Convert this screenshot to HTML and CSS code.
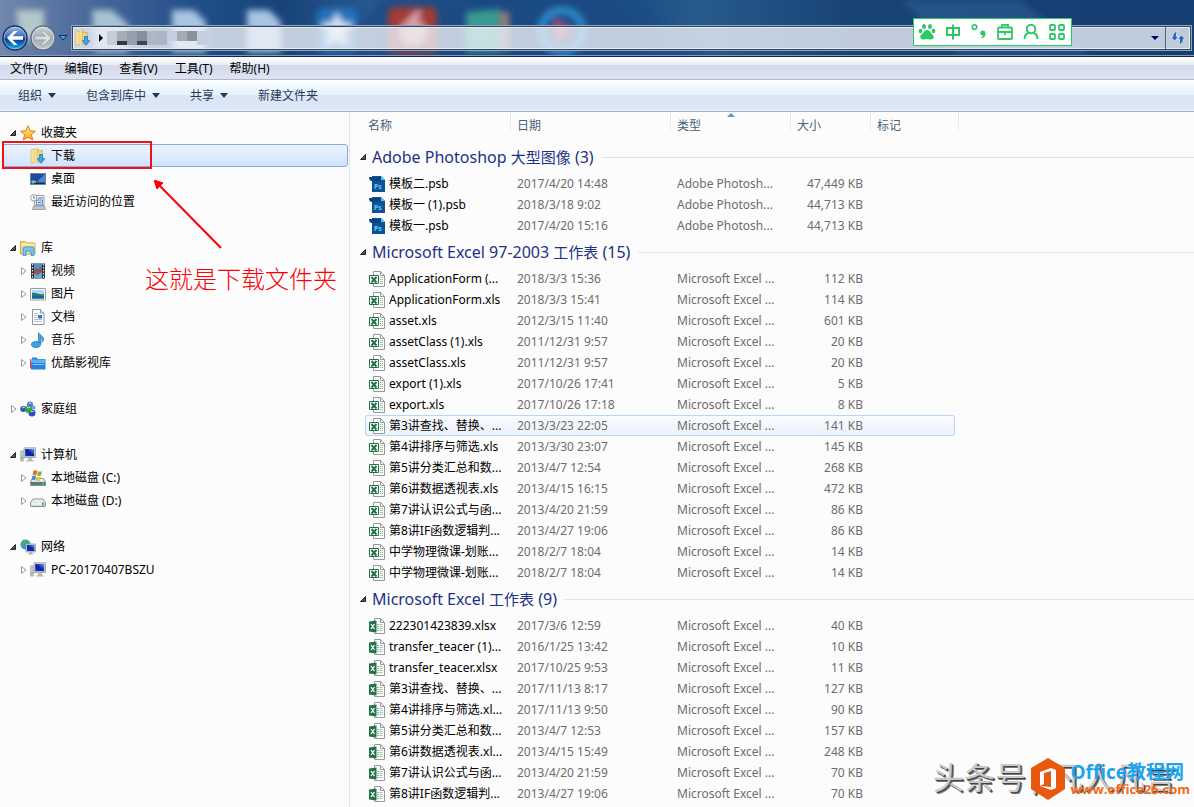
FILE: index.html
```html
<!DOCTYPE html>
<html lang="zh-CN">
<head>
<meta charset="utf-8">
<meta name="viewport" content="width=device-width, initial-scale=1">
<title>下载</title>
<link rel="stylesheet" href="styles.css">
</head>
<body>
<svg class="sprite" aria-hidden="true">
  <defs>
    <linearGradient id="g-folder" x1="0" x2="1"><stop offset="0" stop-color="#fbeeb0"/><stop offset="1" stop-color="#e3bd55"/></linearGradient>
    <linearGradient id="g-screen" x1="0" y1="1" x2="1" y2="0"><stop offset="0" stop-color="#1234b4"/><stop offset=".5" stop-color="#0b22a8"/><stop offset="1" stop-color="#6f9cf0"/></linearGradient>
    <linearGradient id="g-ball" x1="0" x2="0" y1="0" y2="1"><stop offset="0" stop-color="#9fc0ea"/><stop offset=".48" stop-color="#3465b4"/><stop offset=".52" stop-color="#06358e"/><stop offset="1" stop-color="#19b4f5"/></linearGradient>
    <linearGradient id="g-ball-off" x1="0" x2="0" y1="0" y2="1"><stop offset="0" stop-color="#d0d6d8"/><stop offset=".5" stop-color="#a3aeb3"/><stop offset="1" stop-color="#bcc8cc"/></linearGradient>
    <linearGradient id="g-star" x1="0" x2="0" y1="0" y2="1"><stop offset="0" stop-color="#fff08a"/><stop offset="1" stop-color="#f9a81c"/></linearGradient>
    <linearGradient id="g-disk" x1="0" x2="0" y1="0" y2="1"><stop offset="0" stop-color="#fdfdfd"/><stop offset="1" stop-color="#b9bcc0"/></linearGradient>
  </defs>
  <symbol id="open" viewBox="0 0 10 10"><path d="M6.500 2.500v5h-5z" fill="#555" stroke="#262626"/></symbol>
  <symbol id="closed" viewBox="0 0 8 10"><path d="M1.500 1.500 6 5 1.500 8.500z" fill="#fff" stroke="#999"/></symbol>
  <symbol id="star" viewBox="0 0 16 16"><path d="m8 .8 2.100 5 5.300.4-4 3.500 1.300 5.300L8 12.200 3.300 15l1.300-5.300-4-3.500 5.300-.4z" fill="url(#g-star)" stroke="#e07a1a"/></symbol>
  <symbol id="download" viewBox="0 0 16 16"><path d="M1 1.500 8 .5V14l-7 1z" fill="url(#g-folder)" stroke="#d8b550" stroke-width=".7"/><path d="M7 2.500h5.500V14H7z" fill="#f1d67d" stroke="#cda94a" stroke-width=".7"/><path d="M6 .6v14.800" stroke="#fff7cf"/><path d="M9.500 6.500h3v4.200h2.200L11 15.300l-3.700-4.600h2.200z" fill="#3ba9ea" stroke="#1d73b7" stroke-width=".8"/></symbol>
  <symbol id="desktop" viewBox="0 0 16 16"><path d="M.5 2.500h15v11H.5z" fill="#1d4da0" stroke="#70839a"/><path d="M6 12 15 3v9z" fill="#4688d8"/><path d="M1 11.500h14V13H1z" fill="#162d4e"/><circle cx="3" cy="11" r="1.700" fill="#69bde0"/><path d="M3 10h3v2z" fill="#e9c44a"/></symbol>
  <symbol id="recent" viewBox="0 0 16 16"><path d="M4.500 1.500h9.500V12H4.500z" fill="#f1f3f5" stroke="#9aa0a6"/><path d="M3.500 12h11l1 3.500h-13z" fill="#c3c7cb" stroke="#8f959b" stroke-width=".8"/><path d="M6.500 6h6v5h-6z" fill="#cfe3f7" stroke="#5f8fc4"/><path d="M8 8.500h3M8 4h5" stroke="#3f79bf"/><circle cx="3.700" cy="3.700" r="3.200" fill="#f4f5f6" stroke="#9ba3ab"/><path d="M3.700 2v2h1.500" fill="none" stroke="#555" stroke-width=".7"/></symbol>
  <symbol id="library" viewBox="0 0 16 16"><path d="M.5 1.500h5l1 1.500H15v11H.5z" fill="#f3dc85" stroke="#cbaa4c"/><path d="M1 4.500h14" stroke="#fff6c8"/><path d="M3 15.500V9q0-2 2-2h7q2 0 2 2v6.500h-3V11H6v4.500z" fill="#79c7ef" stroke="#398ec8" stroke-width=".8"/></symbol>
  <symbol id="video" viewBox="0 0 16 16"><path d="M1 .5h14v15H1z" fill="#26333d"/><path d="M4 1h8v6.500H4z" fill="#4097d6"/><path d="M4 8.500h8V15H4z" fill="#55aee5"/><path d="m4 7.500 1-2.500 3 1 4-3v4.500zM4 11l4 1 4-3v-.5H4z" fill="#a8533f"/><path d="M2.500 1v15M13.500 1v15" stroke="#dce5ea" stroke-dasharray="1.500 1.500" stroke-width="1.200"/></symbol>
  <symbol id="picture" viewBox="0 0 16 16"><path d="M.5 2.500h15v11.500H.5z" fill="#fff" stroke="#9a9a9a"/><path d="M2 4h12v8.500H2z" fill="#a7d8f5"/><path d="M2 7c4-1 6 2 12 1v4.500H2z" fill="#2b7c6b"/><path d="M2 10.500c5-1 8-1 12 0v2H2z" fill="#1a5fa8"/></symbol>
  <symbol id="document" viewBox="0 0 16 16"><path d="M2.500.5h8L14 4v11.500H2.500z" fill="#fff" stroke="#8c959d"/><path d="M10.500.5V4H14" fill="#e4e8eb" stroke="#8c959d"/><path d="M4 4.500h4M4 6.500h3M4 8.500h3M4 10.500h8M4 12.500h8" stroke="#9daec5" stroke-width=".8"/><path d="M8 6h4v3.500H8z" fill="#3679c2"/></symbol>
  <symbol id="music" viewBox="0 0 16 16"><path d="M8.500 12.500V.5c1 2.800 5.500 3.300 5 7.500-.2 1.300-1 2-1.800 2.500C13.300 7 11 6 10.500 5.500V12" fill="#45a9e6" stroke="#1b6fb4" stroke-width=".7"/><ellipse cx="6" cy="12.500" rx="4.600" ry="3" fill="#36a4e8" stroke="#1b75bb" stroke-width=".7"/></symbol>
  <symbol id="youku" viewBox="0 0 16 16"><path d="M.5 4v9l2 1z" fill="#e2405b" stroke="#e2405b"/><path d="M2 2.500h4.500L8 4h7.500v10.500H1z" fill="#2784dc"/><path d="M2 4.500h13.500V8H2z" fill="#5fb0f2"/><path d="M3 9.500h11" stroke="#b9dcfb" stroke-dasharray="1.500 .6"/></symbol>
  <symbol id="homegroup" viewBox="0 0 16 16"><circle cx="10" cy="3.500" r="3" fill="#4877d8"/><circle cx="3.200" cy="8" r="3" fill="#2855c0"/><circle cx="12" cy="12" r="3.500" fill="#2c4eba"/><circle cx="8.500" cy="8.300" r="3.700" fill="#38a341"/><circle cx="13.500" cy="6.500" r="2" fill="#6da4e9"/><path d="M2 7.200q1-1.500 2.500-.7M9 2.500q1-1 2.200 0M7 7q1.500-2 3-.5M11 11q1-1.300 2.500-.5" stroke="#e4f1ff" fill="none"/></symbol>
  <symbol id="computer" viewBox="0 0 16 16"><path d="M.8 4h2.400v10H.8z" fill="#d8d9da" stroke="#888" stroke-width=".7"/><path d="M1.500 10h1v2h-1z" fill="#2fbb3d"/><path d="M4 .8h11.500v9.700H4z" fill="#d9dadb" stroke="#999" stroke-width=".8"/><path d="M5.200 2h9v7.200h-9z" fill="url(#g-screen)"/><path d="M8.500 10.500h3l1 3h1.500v1H6v-1h1.500z" fill="#b7b9bb"/></symbol>
  <symbol id="disk-c" viewBox="0 0 16 16"><path d="m2.500 8.500-2 3.500v3.500h15V12l-2-3.500z" fill="url(#g-disk)" stroke="#777" stroke-width=".8"/><path d="M1 12h14v3H1z" fill="#487d8c"/><path d="M12 13h2v1.500h-2z" fill="#45e04d"/><path d="M3.500.7q2-1 3.800 0l-1 4.500q-1.800-1-3.800 0z" fill="#e96334"/><path d="M8 1.300q1.800.8 4 0L11 5.500q-1.900.8-4 0z" fill="#79b939"/><path d="M2.300 6q2-1 3.800 0l-1 4.300q-1.800-1-3.800 0z" fill="#3993d8"/><path d="M6.800 6.500q1.800.8 4 0l-1 4.200q-1.800.8-4 0z" fill="#f4c430"/></symbol>
  <symbol id="disk-d" viewBox="0 0 16 16"><path d="m3 6-2.500 3.500v3q0 1 1 1h13q1 0 1-1v-3L13 6z" fill="url(#g-disk)" stroke="#777" stroke-width=".8"/><path d="M1.500 9.500h13v3h-13z" fill="#eceded"/><path d="M12 9.500h2v3h-2z" fill="#3dc53f"/></symbol>
  <symbol id="network" viewBox="0 0 16 16"><circle cx="5.500" cy="5.500" r="5" fill="#3290dc"/><path d="M1 5q2-4 5-4l1 2-3 2-1 3zM7 1l3 2-2 3z" fill="#52b947"/><path d="M6 5h9.500v8H6z" fill="#cfd3d7" stroke="#8c939b" stroke-width=".7"/><path d="M7 6h7.500v6H7z" fill="url(#g-screen)"/><path d="M10 13h1.500v1.500H13v1H8.500v-1H10z" fill="#9ba0a5"/></symbol>
  <symbol id="ps" viewBox="0 0 16 16"><path d="M3 0h9l4 4v12H3z" fill="#0d5294"/><path d="M0 1h12v4H3Q0 5 0 1z" fill="#08427f"/><path d="M12 0v4h4z" fill="#52c5f1"/></symbol>
  <symbol id="xls" viewBox="0 0 16 16"><path d="M4.500.5h7l4 4v11h-11z" fill="#fff" stroke="#999"/><path d="M11.500.5v4h4" fill="none" stroke="#999"/><path d="M11 6.500h3M11 8.500h3M11 10.500h3M11 12.500h3" stroke="#8dbb9f" stroke-dasharray="1.200 .6"/><path d="M.5 4.500h9v8h-9z" fill="#fff" stroke="#217346"/><path d="m2.500 6 5 5.500M7.500 6l-5 5.500" stroke="#217346" stroke-width="2"/></symbol>
  <symbol id="xlsx" viewBox="0 0 16 16"><path d="M5.500.5h6l4 4v11h-10z" fill="#fff" stroke="#999"/><path d="M11.500.5v4h4" fill="none" stroke="#999"/><path d="M8 6.500h6M8 8.500h6M8 10.500h6M8 12.500h6" stroke="#8dbb9f" stroke-dasharray="2 .7"/><path d="M0 3.500 7.500 2.500v12L0 13.500z" fill="#217346"/><path d="m2 6 3.500 5M5.500 6 2 11" stroke="#fff" stroke-width="1.300"/></symbol>
</svg>

<header class="titlebar">
  <svg class="glass" viewBox="0 0 1194 56" preserveAspectRatio="xMinYMin slice" aria-hidden="true">
    <defs><filter id="soft" x="-30%" y="-30%" width="160%" height="160%"><feGaussianBlur stdDeviation="3"/></filter></defs>
    <path d="M380 0h250l80 56H330z" fill="#1c4c84" opacity=".7" filter="url(#soft)"/>
    <path d="M900 0h120l70 56H960z" fill="#37699f" opacity=".45" filter="url(#soft)"/>
    <g filter="url(#soft)">
      <path d="M16 10h28v30H20z" fill="#b3c8cb"/>
      <path d="M92 10h20l16 14v28H94z" fill="#a8c3d2"/>
      <path d="M172 10h22l12 12v30h-34z" fill="#a9c5e4"/>
      <path d="M247 10h22l12 12v30h-34z" fill="#a9c5e4"/>
      <rect x="317" y="8" width="40" height="44" rx="8" fill="#2173bd"/>
      <path d="m337 12 5 10 12 2-9 8 3 14-11-7-11 7 3-14-9-8 12-2z" fill="#cfe3f5"/>
      <rect x="388" y="7" width="49" height="46" rx="7" fill="#a33a35"/>
      <circle cx="413" cy="32" r="13" fill="#d99da2"/><path d="m411 20 9-8" stroke="#d9b3bc" stroke-width="5"/>
      <path d="M466 12 500 9v43h-34z" fill="#399a90"/><path d="M501 12h8v38h-8z" fill="#9b8176"/>
      <circle cx="562" cy="31" r="21" fill="#1d4d88" stroke="#2e8bcd" stroke-width="7"/><path d="m555 19 18 12-18 12z" fill="#b04868"/>
    </g>
  </svg>
  <div class="history">
    <button class="ball" aria-label="后退"><svg viewBox="0 0 28 28"><circle cx="14" cy="14" r="12" fill="url(#g-ball)" stroke="#1b345c" stroke-width="1.500"/><circle cx="14" cy="14" r="10.800" fill="none" stroke="#b9d3f2" stroke-opacity=".6"/><path d="M6 14l7-7h3.500l-5 5.200H22v3.600H11.500l5 5.200H13z" fill="#fff"/></svg></button>
    <button class="ball" aria-label="前进"><svg viewBox="0 0 28 28"><circle cx="14" cy="14" r="12" fill="url(#g-ball-off)" stroke="#5e6f82" stroke-width="1.500"/><circle cx="14" cy="14" r="10.800" fill="none" stroke="#e3e9ec" stroke-opacity=".7"/><path d="M22 14l-7-7h-3.500l5 5.200H6v3.600h10.500l-5 5.200H15z" fill="#d9dfe2" stroke="#8c979e" stroke-width=".5"/></svg></button>
    <button class="recent-pages" aria-label="最近浏览"><svg viewBox="0 0 10 6"><path d="M1 .5h8L5 5z" fill="#3da6dc" stroke="#0d2c57"/></svg></button>
  </div>
  <div class="address">
    <svg class="icon"><use href="#download"/></svg>
    <svg class="crumb-arrow" viewBox="0 0 4 8"><path d="M0 0v8l4-4z"/></svg>
    <svg class="mosaic" viewBox="0 0 106 16" aria-hidden="true"><path d="M0 1h10v14H0z" fill="#c7cdd6"/><path d="M10 1h10v10H10z" fill="#a5adb7"/><path d="M10 11h10v4H10z" fill="#333941"/><path d="M20 1h10v14H20z" fill="#949fad"/><path d="M30 1h10v10H30z" fill="#858f9c"/><path d="M30 11h10v4H30z" fill="#41474f"/><path d="M40 1h10v14H40z" fill="#adb8c6"/><path d="M50 1h10v14H50z" fill="#a9b6c8"/><path d="M60 1h10v10H60z" fill="#c4cfde"/><path d="M70 1h10v10H70z" fill="#a3abb6"/><path d="M80 1h10v10H80z" fill="#8b9299"/><path d="M90 1h16v14H90z" fill="#c4d0e0"/></svg>
    <button class="address-drop" aria-label="以前的位置"><svg viewBox="0 0 8 4"><path d="M0 0h8L4 4z" fill="#000058"/></svg></button>
    <button class="refresh" aria-label="刷新"><svg viewBox="0 0 16 16"><path d="M7.500 1Q6 2.500 6.500 6.500H8.500L4.800 11 .5 7h2.200Q2.500 2.500 7.500 1zM8.500 15q1.500-1.500 1-5.500h-2L11.200 5l4.300 4h-2.200q.2 4.500-4.800 6z" fill="#2d68bd" stroke="#eef5fc" stroke-width=".7"/></svg></button>
  </div>
  <div class="ime">
    <button aria-label="输入法"><svg viewBox="0 0 18 18"><g fill="#2dc863"><ellipse cx="6" cy="3.500" rx="2" ry="2.600"/><ellipse cx="12" cy="3.500" rx="2" ry="2.600"/><ellipse cx="2.500" cy="8" rx="1.800" ry="2.300"/><ellipse cx="15.500" cy="8" rx="1.800" ry="2.300"/><path d="M9 7c3 0 3.500 3 5.500 4.500s1.500 5-1.500 5c-1.500 0-2.500-.6-4-.6s-2.500.6-4 .6c-3 0-3.500-3.500-1.500-5S6 7 9 7z"/></g></svg></button>
    <button aria-label="中文"><svg viewBox="0 0 18 18"><path d="M3 5h12v7H3zM9 1.500v15" fill="none" stroke="#2dc863" stroke-width="2"/></svg></button>
    <button aria-label="标点"><svg viewBox="0 0 18 18"><circle cx="4.500" cy="4" r="2.300" fill="none" stroke="#2dc863" stroke-width="1.600"/><path d="M12.500 7.500q3 0 3 3.300 0 3.800-4 4.700v-1.500q1.500-.5 1.600-1.500-2.800 0-2.800-2.500 0-2.500 2.200-2.500z" fill="#2dc863"/></svg></button>
    <button aria-label="工具箱"><svg viewBox="0 0 18 18"><rect x="2" y="4.500" width="14" height="11.500" rx="1" fill="none" stroke="#2dc863" stroke-width="1.800"/><path d="M6 4V1.800h6V4M2 9h14M9 9v3" fill="none" stroke="#2dc863" stroke-width="1.800"/></svg></button>
    <button aria-label="用户"><svg viewBox="0 0 18 18"><circle cx="9" cy="6" r="4.300" fill="none" stroke="#2dc863" stroke-width="1.900"/><path d="M2.500 16q0-5 4-6M15.500 16q0-5-4-6" fill="none" stroke="#2dc863" stroke-width="1.900"/></svg></button>
    <button aria-label="菜单"><svg viewBox="0 0 18 18"><g fill="none" stroke="#2dc863" stroke-width="1.800"><rect x="2" y="2" width="5" height="5" rx="1"/><rect x="11" y="2" width="5" height="5" rx="1"/><rect x="2" y="11" width="5" height="5" rx="1"/><rect x="11" y="11" width="5" height="5" rx="1"/></g></svg></button>
  </div>
</header>

<nav class="menubar">
  <button>文件(F)</button><button>编辑(E)</button><button>查看(V)</button><button>工具(T)</button><button>帮助(H)</button>
</nav>
<div class="toolbar">
  <button>组织<span class="drop"></span></button><button>包含到库中<span class="drop"></span></button><button>共享<span class="drop"></span></button><button>新建文件夹</button>
</div>

<div class="workspace">
  <nav class="sidebar">
    <ul class="tree">
      <li><a class="node" href="#"><svg class="toggle"><use href="#open"/></svg><svg class="icon"><use href="#star"/></svg>收藏夹</a>
        <ul>
          <li class="marked"><a class="node selected" href="#"><span class="toggle"></span><svg class="icon"><use href="#download"/></svg>下载</a></li>
          <li><a class="node" href="#"><span class="toggle"></span><svg class="icon"><use href="#desktop"/></svg>桌面</a></li>
          <li><a class="node" href="#"><span class="toggle"></span><svg class="icon"><use href="#recent"/></svg>最近访问的位置</a></li>
        </ul></li>
      <li><a class="node" href="#"><svg class="toggle"><use href="#open"/></svg><svg class="icon"><use href="#library"/></svg>库</a>
        <ul>
          <li><a class="node" href="#"><svg class="toggle"><use href="#closed"/></svg><svg class="icon"><use href="#video"/></svg>视频</a></li>
          <li><a class="node" href="#"><svg class="toggle"><use href="#closed"/></svg><svg class="icon"><use href="#picture"/></svg>图片</a></li>
          <li><a class="node" href="#"><svg class="toggle"><use href="#closed"/></svg><svg class="icon"><use href="#document"/></svg>文档</a></li>
          <li><a class="node" href="#"><svg class="toggle"><use href="#closed"/></svg><svg class="icon"><use href="#music"/></svg>音乐</a></li>
          <li><a class="node" href="#"><svg class="toggle"><use href="#closed"/></svg><svg class="icon"><use href="#youku"/></svg>优酷影视库</a></li>
        </ul></li>
      <li><a class="node" href="#"><svg class="toggle"><use href="#closed"/></svg><svg class="icon"><use href="#homegroup"/></svg>家庭组</a></li>
      <li><a class="node" href="#"><svg class="toggle"><use href="#open"/></svg><svg class="icon"><use href="#computer"/></svg>计算机</a>
        <ul>
          <li><a class="node" href="#"><svg class="toggle"><use href="#closed"/></svg><svg class="icon"><use href="#disk-c"/></svg>本地磁盘 (C:)</a></li>
          <li><a class="node" href="#"><svg class="toggle"><use href="#closed"/></svg><svg class="icon"><use href="#disk-d"/></svg>本地磁盘 (D:)</a></li>
        </ul></li>
      <li><a class="node" href="#"><svg class="toggle"><use href="#open"/></svg><svg class="icon"><use href="#network"/></svg>网络</a>
        <ul>
          <li><a class="node" href="#"><svg class="toggle"><use href="#closed"/></svg><svg class="icon"><use href="#computer"/></svg>PC-20170407BSZU</a></li>
        </ul></li>
    </ul>
    <div class="callout">
      <svg viewBox="0 0 70 70"><path d="M4 4 67 68" stroke="#fe0000" stroke-width="2"/><path d="M0 0 9 3 3 9z" fill="#fe0000" stroke="#fe0000"/></svg>
      <p>这就是下载文件夹</p>
    </div>
  </nav>

  <main class="files">
    <table>
      <colgroup><col class="c-edge"><col class="c-name"><col class="c-date"><col class="c-type"><col class="c-size"><col class="c-tag"><col class="c-gap"><col></colgroup>
      <thead><tr><td></td><th>名称</th><th>日期</th><th class="sorted">类型</th><th>大小</th><th>标记</th><td class="last"></td><td></td></tr></thead>
      <tbody>
        <tr class="group"><th colspan="8"><div><svg class="toggle"><use href="#open"/></svg><p>Adobe Photoshop <span>大型图像</span> (3)</p></div></th></tr>
        <tr><td></td><td><svg class="icon"><use href="#ps"/><text x="5" y="13">Ps</text></svg>模板二.psb</td><td>2017/4/20 14:48</td><td>Adobe Photosh...</td><td>47,449 KB</td><td></td></tr>
        <tr><td></td><td><svg class="icon"><use href="#ps"/><text x="5" y="13">Ps</text></svg>模板一 (1).psb</td><td>2018/3/18 9:02</td><td>Adobe Photosh...</td><td>44,713 KB</td><td></td></tr>
        <tr><td></td><td><svg class="icon"><use href="#ps"/><text x="5" y="13">Ps</text></svg>模板一.psb</td><td>2017/4/20 15:16</td><td>Adobe Photosh...</td><td>44,713 KB</td><td></td></tr>
      </tbody>
      <tbody>
        <tr class="group"><th colspan="8"><div><svg class="toggle"><use href="#open"/></svg><p>Microsoft Excel 97-2003 <span>工作表</span> (15)</p></div></th></tr>
        <tr><td></td><td><svg class="icon"><use href="#xls"/></svg>ApplicationForm (...</td><td>2018/3/3 15:36</td><td>Microsoft Excel ...</td><td>112 KB</td><td></td></tr>
        <tr><td></td><td><svg class="icon"><use href="#xls"/></svg>ApplicationForm.xls</td><td>2018/3/3 15:41</td><td>Microsoft Excel ...</td><td>114 KB</td><td></td></tr>
        <tr><td></td><td><svg class="icon"><use href="#xls"/></svg>asset.xls</td><td>2012/3/15 11:40</td><td>Microsoft Excel ...</td><td>601 KB</td><td></td></tr>
        <tr><td></td><td><svg class="icon"><use href="#xls"/></svg>assetClass (1).xls</td><td>2011/12/31 9:57</td><td>Microsoft Excel ...</td><td>20 KB</td><td></td></tr>
        <tr><td></td><td><svg class="icon"><use href="#xls"/></svg>assetClass.xls</td><td>2011/12/31 9:57</td><td>Microsoft Excel ...</td><td>20 KB</td><td></td></tr>
        <tr><td></td><td><svg class="icon"><use href="#xls"/></svg>export (1).xls</td><td>2017/10/26 17:41</td><td>Microsoft Excel ...</td><td>5 KB</td><td></td></tr>
        <tr><td></td><td><svg class="icon"><use href="#xls"/></svg>export.xls</td><td>2017/10/26 17:18</td><td>Microsoft Excel ...</td><td>8 KB</td><td></td></tr>
        <tr class="hot"><td></td><td><svg class="icon"><use href="#xls"/></svg>第3讲查找、替换、...</td><td>2013/3/23 22:05</td><td>Microsoft Excel ...</td><td>141 KB</td><td></td></tr>
        <tr><td></td><td><svg class="icon"><use href="#xls"/></svg>第4讲排序与筛选.xls</td><td>2013/3/30 23:07</td><td>Microsoft Excel ...</td><td>145 KB</td><td></td></tr>
        <tr><td></td><td><svg class="icon"><use href="#xls"/></svg>第5讲分类汇总和数...</td><td>2013/4/7 12:54</td><td>Microsoft Excel ...</td><td>268 KB</td><td></td></tr>
        <tr><td></td><td><svg class="icon"><use href="#xls"/></svg>第6讲数据透视表.xls</td><td>2013/4/15 16:15</td><td>Microsoft Excel ...</td><td>472 KB</td><td></td></tr>
        <tr><td></td><td><svg class="icon"><use href="#xls"/></svg>第7讲认识公式与函...</td><td>2013/4/20 21:59</td><td>Microsoft Excel ...</td><td>86 KB</td><td></td></tr>
        <tr><td></td><td><svg class="icon"><use href="#xls"/></svg>第8讲IF函数逻辑判...</td><td>2013/4/27 19:06</td><td>Microsoft Excel ...</td><td>86 KB</td><td></td></tr>
        <tr><td></td><td><svg class="icon"><use href="#xls"/></svg>中学物理微课-划账...</td><td>2018/2/7 18:04</td><td>Microsoft Excel ...</td><td>14 KB</td><td></td></tr>
        <tr><td></td><td><svg class="icon"><use href="#xls"/></svg>中学物理微课-划账...</td><td>2018/2/7 18:04</td><td>Microsoft Excel ...</td><td>14 KB</td><td></td></tr>
      </tbody>
      <tbody>
        <tr class="group"><th colspan="8"><div><svg class="toggle"><use href="#open"/></svg><p>Microsoft Excel <span>工作表</span> (9)</p></div></th></tr>
        <tr><td></td><td><svg class="icon"><use href="#xlsx"/></svg>222301423839.xlsx</td><td>2017/3/6 12:59</td><td>Microsoft Excel ...</td><td>40 KB</td><td></td></tr>
        <tr><td></td><td><svg class="icon"><use href="#xlsx"/></svg>transfer_teacer (1)...</td><td>2016/1/25 13:42</td><td>Microsoft Excel ...</td><td>10 KB</td><td></td></tr>
        <tr><td></td><td><svg class="icon"><use href="#xlsx"/></svg>transfer_teacer.xlsx</td><td>2017/10/25 9:53</td><td>Microsoft Excel ...</td><td>11 KB</td><td></td></tr>
        <tr><td></td><td><svg class="icon"><use href="#xlsx"/></svg>第3讲查找、替换、...</td><td>2017/11/13 8:17</td><td>Microsoft Excel ...</td><td>127 KB</td><td></td></tr>
        <tr><td></td><td><svg class="icon"><use href="#xlsx"/></svg>第4讲排序与筛选.xl...</td><td>2017/11/13 9:50</td><td>Microsoft Excel ...</td><td>90 KB</td><td></td></tr>
        <tr><td></td><td><svg class="icon"><use href="#xlsx"/></svg>第5讲分类汇总和数...</td><td>2013/4/7 12:53</td><td>Microsoft Excel ...</td><td>157 KB</td><td></td></tr>
        <tr><td></td><td><svg class="icon"><use href="#xlsx"/></svg>第6讲数据透视表.xl...</td><td>2013/4/15 15:49</td><td>Microsoft Excel ...</td><td>248 KB</td><td></td></tr>
        <tr><td></td><td><svg class="icon"><use href="#xlsx"/></svg>第7讲认识公式与函...</td><td>2013/4/20 21:59</td><td>Microsoft Excel ...</td><td>70 KB</td><td></td></tr>
        <tr><td></td><td><svg class="icon"><use href="#xlsx"/></svg>第8讲IF函数逻辑判...</td><td>2013/4/27 19:06</td><td>Microsoft Excel ...</td><td>70 KB</td><td></td></tr>
      </tbody>
    </table>
  </main>
</div>

<div class="credit">头条号 / 凡人凡言</div>
<div class="brand">
  <svg viewBox="0 0 36 44"><path d="M18 1 35 11v21L18 43 1 32V11z" fill="#e8590f"/><path d="M10 15 21 11l5 2v18l-5 2-11-4 11 1V14l-7 2v11l-4 2z" fill="#fff"/></svg>
  <div><strong>Office教程网</strong><small>www.office26.com</small></div>
</div>
</body>
</html>
```
FILE: styles.css
```css
*,
*::before,
*::after {
  box-sizing: border-box;
}

body {
  margin: 0;
  min-height: 100vh;
  position: relative;
  display: flex;
  flex-direction: column;
  background: #fcfcfc;
  color: #000;
  font: 12px/20px "Noto Sans", "Noto Sans CJK SC", sans-serif;
}

button {
  padding: 0;
  border: 0;
  background: none;
  color: inherit;
  font: inherit;
}

svg {
  display: block;
}

p {
  margin: 0;
}

ul {
  margin: 0;
  padding: 0;
  list-style: none;
}

a {
  color: inherit;
  text-decoration: none;
}

.sprite {
  position: absolute;
  width: 0;
  height: 0;
}

.icon {
  flex: none;
  width: 16px;
  height: 16px;
}

.icon text {
  fill: #5ccbf5;
  font: bold 7px "Noto Sans", sans-serif;
}

/* Title bar */
.titlebar {
  position: relative;
  display: flex;
  align-items: flex-end;
  height: 57px;
  padding: 0 3px 6px 1px;
  border-bottom: 1px solid #172640;
  box-shadow: inset 0 -1px #7f9cc0;
  background: linear-gradient(90deg, #7287ad 0, #4a689a 90px, #234f8a 190px, #174379 280px, #285891 370px, #1a477f 480px, #1a4b84 620px, #285a8c 700px, #184375 850px, #153e72 100%);
}

.glass {
  position: absolute;
  top: 0;
  left: 0;
  width: 1194px;
  height: 55px;
}

.history {
  position: relative;
  display: flex;
  align-items: center;
  width: 71px;
  height: 24px;
}

.ball svg {
  width: 28px;
  height: 28px;
}

.recent-pages svg {
  width: 10px;
  height: 6px;
  margin-left: 1px;
}

.address {
  position: relative;
  flex: 1;
  display: flex;
  align-items: center;
  height: 24px;
  padding-left: 2px;
  border: 1px solid #36485e;
  outline: 1px solid #8ea5bd;
  box-shadow: inset 0 0 0 1px #e3ebf3;
  background: rgba(240, 244, 248, .78);
}

.crumb-arrow {
  width: 4px;
  height: 8px;
  margin: 0 4px 0 8px;
}

.mosaic {
  width: 106px;
  height: 16px;
}

.address-drop {
  margin-left: auto;
  padding: 6px;
}

.address-drop svg {
  width: 8px;
  height: 4px;
}

.refresh {
  height: 22px;
  padding: 0 4px;
  border-left: 1px solid #526579;
}

.refresh svg {
  width: 16px;
  height: 16px;
}

.ime {
  position: absolute;
  top: 18px;
  right: 122px;
  display: flex;
  align-items: center;
  justify-content: space-between;
  width: 159px;
  height: 28px;
  padding: 0 5px 0 4px;
  border: 1px solid #2dc863;
  background: #fff;
}

.ime svg {
  width: 18px;
  height: 18px;
}

/* Menu and command bars */
.menubar {
  display: flex;
  gap: 1px;
  height: 23px;
  padding: 2px 0 0 2px;
  border-bottom: 1px solid #b1b9d0;
  background: linear-gradient(#fff, #e8ecf4 8px, #d4daec 8px, #dfe4f3);
}

.menubar button {
  padding: 0 8px;
}

.toolbar {
  display: flex;
  gap: 30px;
  height: 32px;
  padding-left: 18px;
  border-bottom: 1px solid #a0b0c8;
  background: linear-gradient(#fff 1px, #f6fbff 2px, #e7f2fb 15px, #dce7f5 15px, #dae6f4 28px, #e8f1fa);
  color: #1e395b;
}

.toolbar button {
  display: flex;
  align-items: center;
  gap: 6px;
}

.drop {
  border: 4px solid transparent;
  border-top: 5px solid #1e395b;
  border-bottom: 0;
}

.workspace {
  flex: 1;
  display: grid;
  grid-template-columns: 350px 1fr;
}

/* Folder tree */
.sidebar {
  position: relative;
  padding: 9px 1px 0 2px;
  border-right: 1px solid #d9e4f1;
}

.tree > li {
  margin-bottom: 23px;
}

.node {
  display: flex;
  align-items: center;
  height: 23px;
  padding-left: 5px;
  border: 1px solid transparent;
  border-radius: 3px;
}

.tree ul .node {
  padding-left: 15px;
}

.toggle {
  flex: none;
  width: 12px;
  height: 10px;
}

.node .icon {
  margin-right: 5px;
}

.node.selected {
  border-color: #84acdd;
  background: linear-gradient(#eef4fe, #cfe3fd);
}

.marked {
  position: relative;
}

.marked::after {
  content: "";
  position: absolute;
  top: -3px;
  left: 0;
  width: 150px;
  height: 28px;
  border: 2px solid #f01018;
}

.callout {
  position: absolute;
  top: 68px;
  left: 145px;
  color: #fe0000;
}

.callout svg {
  width: 70px;
  height: 70px;
  margin-left: 9px;
}

.callout p {
  margin-top: 12px;
  font: 24px/32px KaiTi, "AR PL UKai CN", "Noto Sans CJK SC", serif;
  font-weight: 300;
  white-space: nowrap;
}

/* File list */
.files {
  min-width: 0;
}

table {
  width: 100%;
  table-layout: fixed;
  border-collapse: separate;
  border-spacing: 0;
}

.c-edge { width: 15px; }
.c-name { width: 146px; }
.c-date { width: 160px; }
.c-type { width: 120px; }
.c-size { width: 80px; }
.c-tag { width: 84px; }
.c-gap { width: 4px; }

th {
  padding: 0;
  font-weight: 400;
  text-align: left;
}

td {
  height: 21px;
  padding: 0;
  color: #6d6d6d;
  line-height: 19px;
  white-space: nowrap;
}

thead th {
  height: 29px;
  padding: 0 6px 2px;
  color: #4c607a;
  background: linear-gradient(#d5e4f5, #eef4fb) right top / 1px 20px no-repeat;
}

thead th:nth-child(2) {
  padding-left: 3px;
}

thead th:nth-child(6) {
  background: none;
}

thead .last {
  background: linear-gradient(#d5e4f5, #eef4fb) right top / 1px 20px no-repeat;
}

.sorted {
  position: relative;
}

.sorted::after {
  content: "";
  position: absolute;
  top: 1px;
  left: 50%;
  margin-left: -4px;
  border: 4px solid transparent;
  border-top: 0;
  border-bottom-color: #4f9cc4;
}

.group div {
  display: flex;
  align-items: center;
  height: 32px;
  padding-left: 8px;
  color: #1e3287;
  font-size: 16px;
}

.group span {
  font-size: 15px;
}

.group .toggle {
  margin-right: 2px;
}

.group div::after {
  content: "";
  flex: 1;
  height: 1px;
  margin-left: 8px;
  background: #e2e2e2;
}

tbody td:nth-child(2) {
  display: flex;
  align-items: center;
  gap: 4px;
  padding-left: 4px;
  color: #000;
}

td:nth-child(3),
td:nth-child(4) {
  padding-left: 6px;
}

td:nth-child(5) {
  padding-right: 8px;
  text-align: right;
}

.hot td:not(:first-child) {
  border: solid #b8d6fb;
  border-width: 1px 0;
  background: linear-gradient(#fafbfd, #ebf3fd);
}

.hot td:nth-child(2) {
  padding-left: 3px;
  border-left-width: 1px;
  border-radius: 3px 0 0 3px;
}

.hot td:last-child {
  border-right-width: 1px;
  border-radius: 0 3px 3px 0;
}

/* Corner marks */
.credit {
  position: absolute;
  right: 18px;
  bottom: 11px;
  color: #c9c9c9;
  font: 31px/40px "Noto Sans CJK SC", sans-serif;
  text-shadow: 1px 1px #444, 2px 2px #777;
}

.brand {
  position: absolute;
  right: 4px;
  bottom: 6px;
  display: flex;
  align-items: center;
  gap: 4px;
}

.brand svg {
  width: 36px;
  height: 44px;
}

.brand strong,
.brand small {
  display: block;
  white-space: nowrap;
}

.brand strong {
  color: #1ca5ec;
  font: bold 19px/20px "Open Sans", "Noto Sans CJK SC", sans-serif;
}

.brand small {
  color: #f06a1c;
  font: bold 13px/14px "Open Sans", sans-serif;
}
```
